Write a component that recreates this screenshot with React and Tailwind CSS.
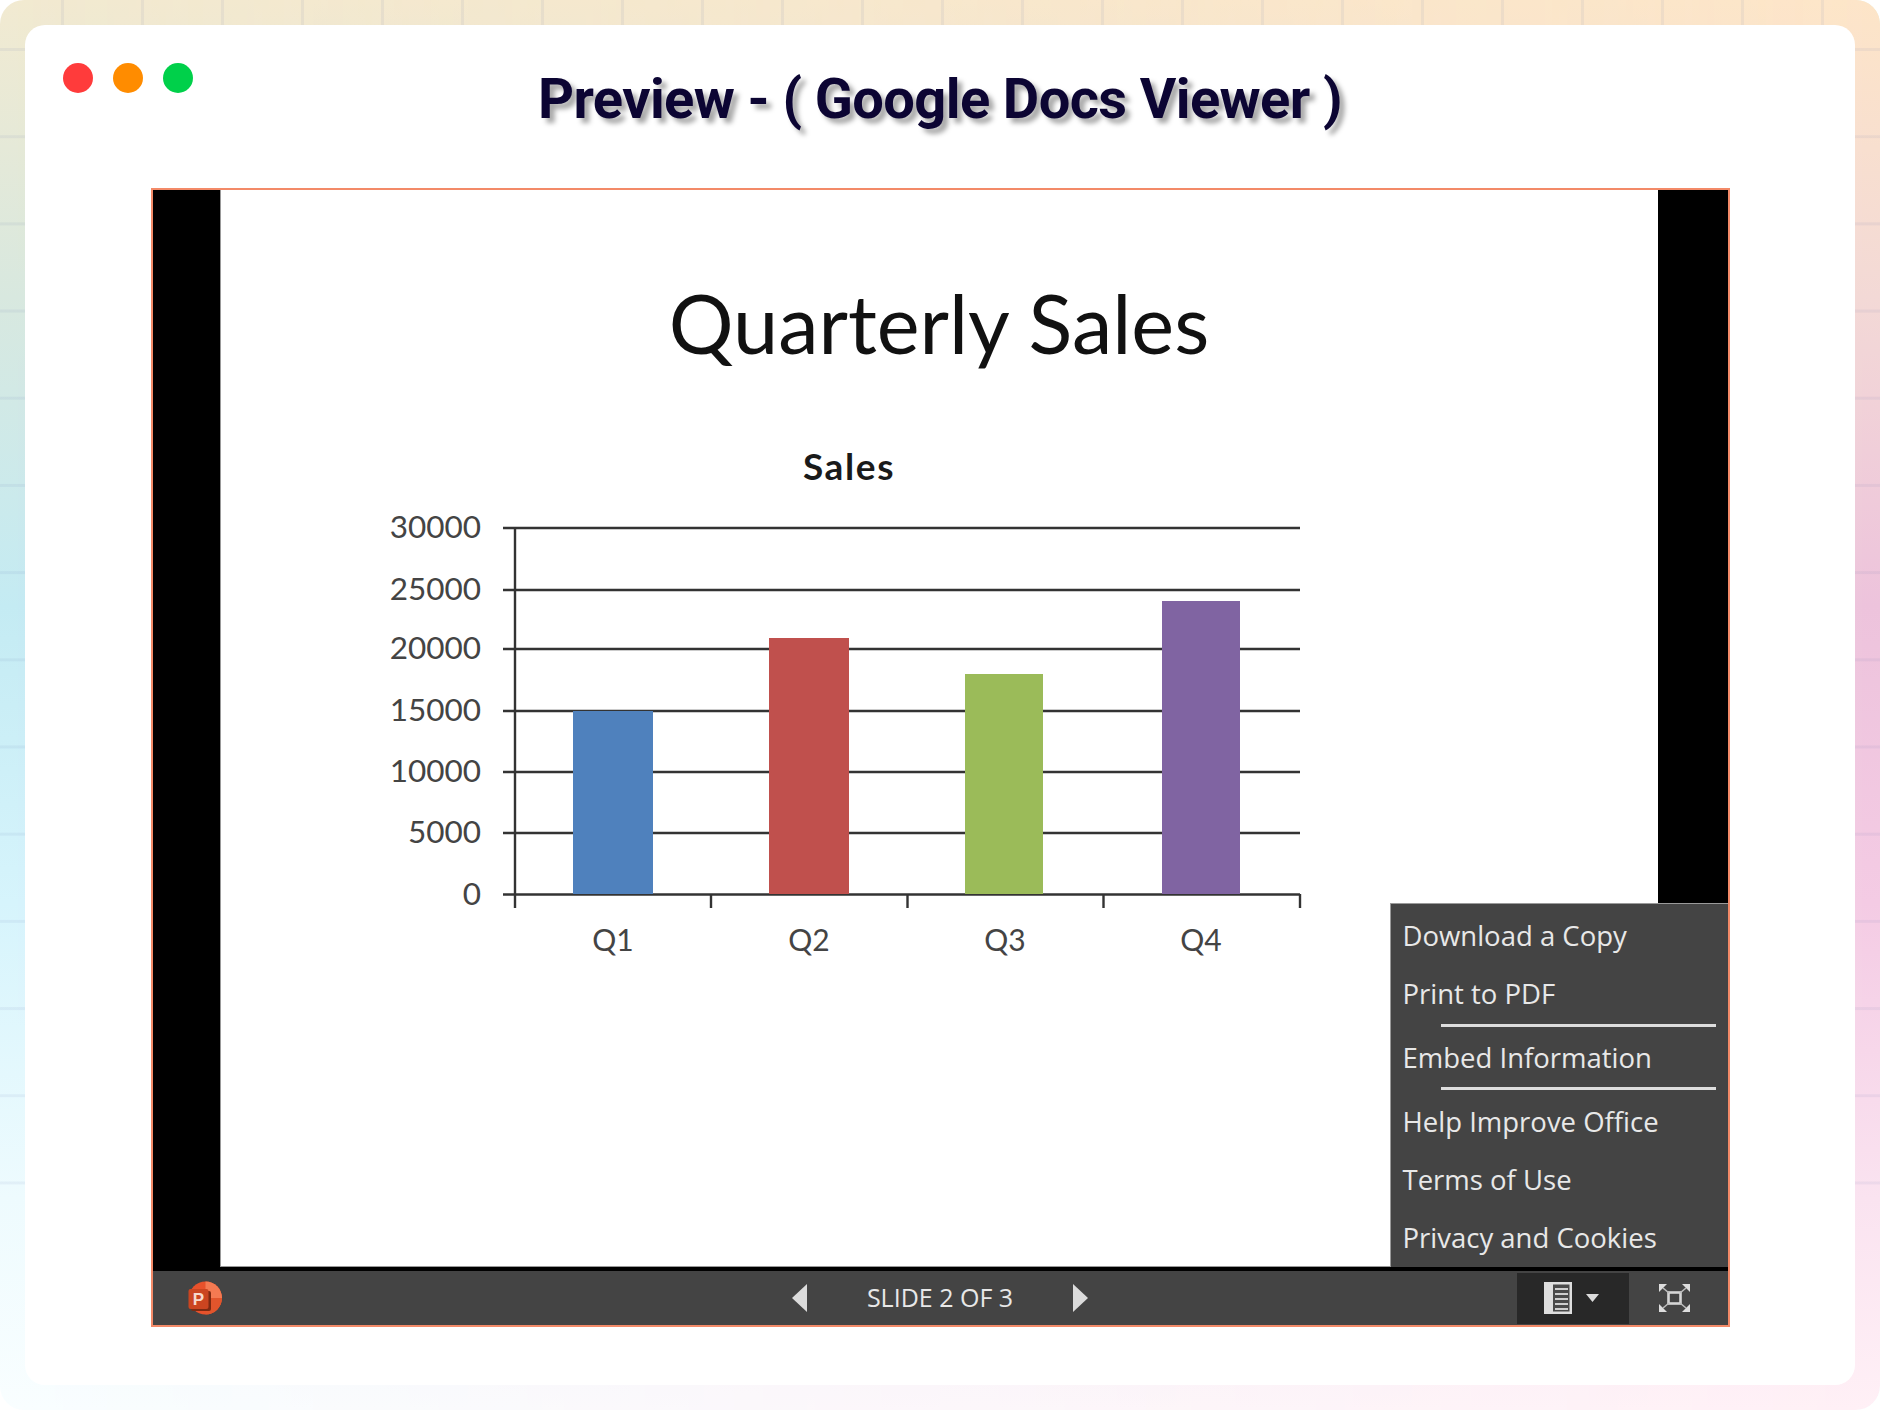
const yTicks = [
  ["30000", 528],
  ["25000", 590],
  ["20000", 649],
  ["15000", 711],
  ["10000", 772],
  ["5000", 833],
  ["0", 894.5],
];

const bars = [
  { x: 573, w: 80, top: 711, fill: "#4f81bd", label: "Q1", lx: 613 },
  { x: 769, w: 80, top: 638, fill: "#c0504d", label: "Q2", lx: 809 },
  { x: 965, w: 78, top: 674, fill: "#9bbb59", label: "Q3", lx: 1005 },
  { x: 1162, w: 78, top: 601, fill: "#8064a2", label: "Q4", lx: 1201 },
];

function Chart() {
  return (
    <svg viewBox="380 440 950 520" className="block w-[950px] h-[520px]">
      <text x="849" y="480" textAnchor="middle" fontSize="37" fontWeight="700" letterSpacing="1.6" fill="#1a1a1a" className="font-['Lato']">Sales</text>
      {yTicks.map(([label, y]) => (
        <g key={label}>
          <line x1="503" x2="1300" y1={y} y2={y} stroke="#333" strokeWidth="2.4" />
          <text x="481" y={y + 10} textAnchor="end" fontSize="31.5" fill="#444" className="font-['Lato']">{label}</text>
        </g>
      ))}
      <line x1="515" x2="515" y1="528" y2="908" stroke="#333" strokeWidth="2.4" />
      {[711, 907.5, 1103.5, 1300].map((x) => (
        <line key={x} x1={x} x2={x} y1="894" y2="908" stroke="#333" strokeWidth="2.4" />
      ))}
      {bars.map((b) => (
        <g key={b.label}>
          <rect x={b.x} y={b.top} width={b.w} height={894 - b.top} fill={b.fill} />
          <text x={b.lx} y="951" textAnchor="middle" fontSize="30" fill="#444" className="font-['Lato']">{b.label}</text>
        </g>
      ))}
    </svg>
  );
}

function MenuItem({ children, className = "h-[58px]" }) {
  return (
    <div className={`${className} shrink-0 flex items-center pl-[12px] pb-[2px] text-[27.5px] text-[#e8e8e8] font-['Open_Sans',sans-serif]`}>
      {children}
    </div>
  );
}

function Divider() {
  return <div className="h-[3px] shrink-0 ml-[50px] w-[275px] bg-[#dedede]" />;
}

function PowerPointIcon() {
  return (
    <svg viewBox="0 0 34 34" className="w-[34px] h-[34px]">
      <circle cx="17.5" cy="17" r="16.5" fill="#e8512b" />
      <path d="M17.5 .5A16.5 16.5 0 0 1 34 17H17.5Z" fill="#f47a52" />
      <path d="M17.5 17H34A16.5 16.5 0 0 1 17.5 33.5Z" fill="#e2552c" />
      <rect x="3" y="10" width="20" height="20" rx="2" fill="#7d2a12" />
      <rect x="0.5" y="8" width="20" height="20" rx="2" fill="#cb4520" />
      <text x="10.5" y="23.5" textAnchor="middle" fontSize="17" fontWeight="700" fill="#f6d8cc" className="font-['Liberation_Sans']">P</text>
    </svg>
  );
}

function LayoutIcon() {
  return (
    <svg viewBox="0 0 28 32" className="w-[28px] h-[32px]">
      <rect x="0" y="0" width="28" height="32" fill="#dedede" />
      <rect x="9" y="2.5" width="16.5" height="27" fill="#4a4a4a" />
      <g stroke="#cfcfcf" strokeWidth="2">
        <line x1="11" x2="24" y1="7" y2="7" />
        <line x1="11" x2="24" y1="12" y2="12" />
        <line x1="11" x2="24" y1="17" y2="17" />
        <line x1="11" x2="24" y1="22" y2="22" />
        <line x1="11" x2="24" y1="27" y2="27" />
      </g>
    </svg>
  );
}

function FullscreenIcon() {
  return (
    <svg viewBox="0 0 31 28" className="w-[31px] h-[28px]" fill="none">
      <rect x="9.5" y="8.5" width="12" height="11" stroke="#d6d6d6" strokeWidth="2.6" />
      <g stroke="#bdbdbd" strokeWidth="1.6">
        <line x1="4" y1="4" x2="10" y2="9" />
        <line x1="27" y1="4" x2="21" y2="9" />
        <line x1="4" y1="24" x2="10" y2="19" />
        <line x1="27" y1="24" x2="21" y2="19" />
      </g>
      <g fill="#dedede">
        <path d="M0 0h8L0 8Z" />
        <path d="M31 0h-8l8 8Z" />
        <path d="M0 28h8L0 20Z" />
        <path d="M31 28h-8l8-8Z" />
      </g>
    </svg>
  );
}

export default function App() {
  return (
    <div className="relative w-[1880px] h-[1410px] bg-white overflow-hidden">
      {/* decorative page backdrop */}
      <div className="absolute inset-0 rounded-[24px] bg-[linear-gradient(to_bottom,#f2ead1_0%,#d8e8df_21%,#c4ebf3_43%,#d6f4fc_64%,#eefbfe_85%,#f9feff_100%)]" />
      <div className="absolute inset-0 rounded-[24px] bg-[linear-gradient(to_bottom,#fde5c8_0%,#f3d9d6_21%,#edc3dc_43%,#f4cbe4_64%,#fae3f0_85%,#fff0f6_100%)] [mask-image:linear-gradient(to_right,transparent_0%,black_100%)]" />
      <div className="absolute inset-0 rounded-[24px] bg-[linear-gradient(to_right,rgba(90,110,170,0.08)_3px,transparent_3px),linear-gradient(to_bottom,rgba(90,110,170,0.08)_3px,transparent_3px)] [background-size:80px_87.2px] [background-position:61px_48px] [mask-image:linear-gradient(to_bottom,black_85%,transparent_85.5%)]" />

      <div className="relative pt-[25px] px-[25px]">
        <div className="w-[1830px] h-[1360px] rounded-[20px] bg-white flex flex-col">
          <header className="h-[163px] shrink-0 grid grid-cols-[1fr_auto_1fr] items-start pl-[38px] pr-[38px] pt-[38px]">
            <div className="flex gap-[20px]">
              <span className="w-[30px] h-[30px] rounded-full bg-[#ff3b3b]" />
              <span className="w-[30px] h-[30px] rounded-full bg-[#ff8c00]" />
              <span className="w-[30px] h-[30px] rounded-full bg-[#00d04a]" />
            </div>
            <h1 className="text-[56px] leading-[72px] tracking-[-0.6px] font-bold text-[#0c0533] font-['Roboto',sans-serif] [text-shadow:5px_5px_5px_rgba(0,0,0,0.35)] whitespace-nowrap">
              Preview - ( Google Docs Viewer )
            </h1>
            <div />
          </header>

          <div className="w-[1579px] h-[1139px] mx-auto border-2 border-[#f38a68] flex flex-col">
            <div className="relative h-[1077px] shrink-0 flex">
              <div className="w-[67px] bg-black" />
              <div className="flex-1 bg-white border-l border-b border-[#999999] flex flex-col">
                <div className="pt-[83px] h-[186px] text-center text-[81px] leading-[100px] text-[#111111] font-['Lato',sans-serif]">
                  Quarterly Sales
                </div>
                <div className="ml-[159px] mt-[64px]">
                  <Chart />
                </div>
              </div>
              <div className="w-[70px] bg-black" />

              <div className="absolute right-0 bottom-0 w-[338px] h-[364px] bg-[#444444] border-t border-l border-[#9a9a9a] pt-[4px] flex flex-col overflow-hidden">
                <MenuItem>Download a Copy</MenuItem>
                <MenuItem>Print to PDF</MenuItem>
                <Divider />
                <MenuItem className="h-[56px] mt-[4px]">Embed Information</MenuItem>
                <Divider />
                <MenuItem className="h-[58px] mt-[4px]">Help Improve Office</MenuItem>
                <MenuItem>Terms of Use</MenuItem>
                <MenuItem>Privacy and Cookies</MenuItem>
              </div>
            </div>

            <div className="h-[4px] shrink-0 bg-black" />

            <footer className="h-[54px] shrink-0 bg-[#444444] grid grid-cols-[1fr_auto_1fr] items-center">
              <div className="pl-[35px] flex">
                <PowerPointIcon />
              </div>
              <div className="flex items-center">
                <svg viewBox="0 0 15 28" className="w-[15px] h-[28px]">
                  <path d="M15 0V28L0 14Z" fill="#dcdcdc" />
                </svg>
                <span className="mx-[60px] text-[25px] text-[#e8e8e8] font-['Open_Sans',sans-serif] whitespace-nowrap">
                  SLIDE 2 OF 3
                </span>
                <svg viewBox="0 0 15 28" className="w-[15px] h-[28px]">
                  <path d="M0 0V28L15 14Z" fill="#dcdcdc" />
                </svg>
              </div>
              <div className="flex items-center justify-end pr-[38px] gap-[30px]">
                <div className="w-[112px] h-[51px] bg-[#282828] flex items-center pl-[27px] gap-[14px]">
                  <LayoutIcon />
                  <svg viewBox="0 0 13 8" className="w-[13px] h-[8px]">
                    <path d="M0 0H13L6.5 8Z" fill="#dcdcdc" />
                  </svg>
                </div>
                <FullscreenIcon />
              </div>
            </footer>
          </div>
        </div>
      </div>
    </div>
  );
}
